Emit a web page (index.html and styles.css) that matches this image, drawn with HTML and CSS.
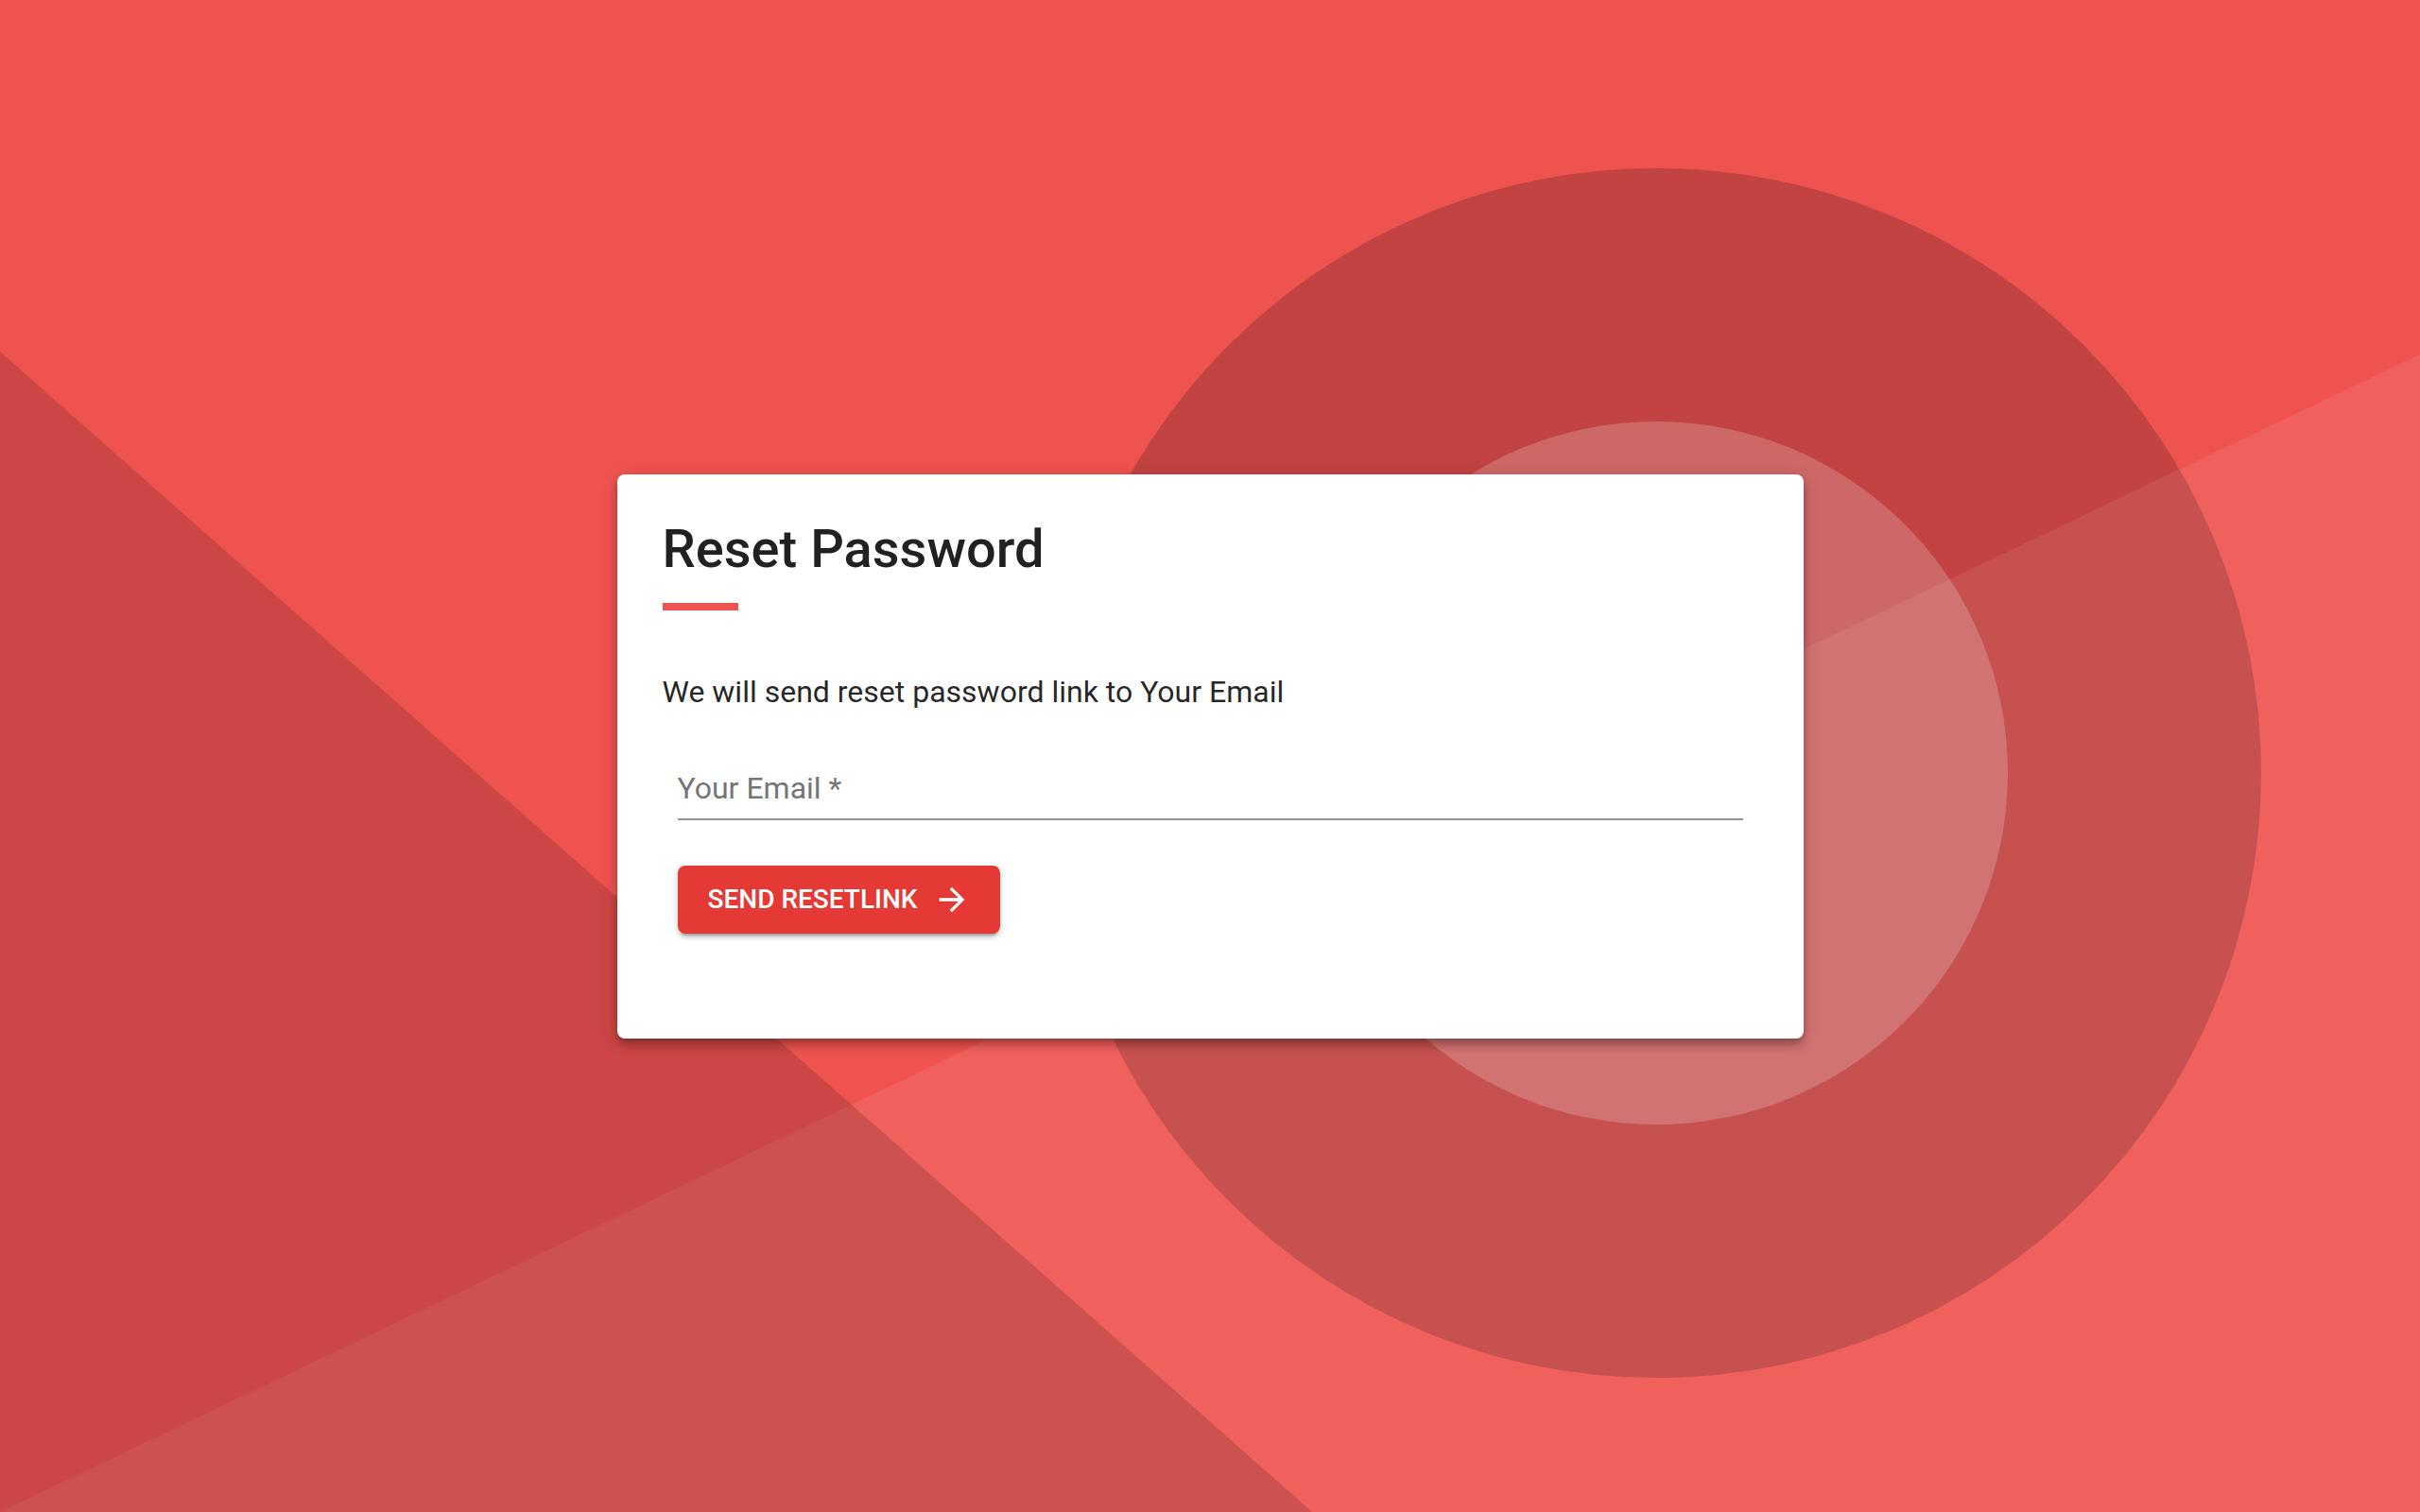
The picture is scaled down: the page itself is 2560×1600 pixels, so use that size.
FILE: index.html
```html
<!DOCTYPE html>
<html lang="en">
<head>
<meta charset="utf-8">
<title>Reset Password</title>
<link rel="stylesheet" href="styles.css">
</head>
<body>
<svg class="backdrop" viewBox="0 0 2560 1600" preserveAspectRatio="none" aria-hidden="true">
  <rect x="0" y="0" width="2560" height="1600" fill="#ef5350"/>
  <circle cx="1752" cy="818" r="640" fill="#000" fill-opacity="0.19"/>
  <circle cx="1752" cy="818" r="372" fill="#fff" fill-opacity="0.2"/>
  <polygon points="2560,375 2560,1600 0,1600" fill="#fff" fill-opacity="0.08"/>
  <polygon points="0,372 1388,1600 0,1600" fill="#000" fill-opacity="0.15"/>
</svg>
<main class="page">
  <section class="card">
    <h1 class="card-title">Reset Password</h1>
    <div class="title-rule"></div>
    <p class="card-text">We will send reset password link to Your Email</p>
    <form class="reset-form" onsubmit="return false">
      <input class="field-input" type="email" placeholder="Your Email *" aria-label="Your Email">
      <button class="send-btn" type="submit">
        <span class="send-label">SEND RESETLINK</span>
        <svg class="send-icon" viewBox="0 0 24 24" aria-hidden="true"><path d="M12 4l-1.41 1.41L16.17 11H4v2h12.17l-5.58 5.59L12 20l8-8z"/></svg>
      </button>
    </form>
  </section>
</main>
</body>
</html>
```

FILE: styles.css
```css
html, body {
  margin: 0;
  padding: 0;
  width: 100%;
  height: 100%;
  overflow: hidden;
}

body {
  position: relative;
  font-family: Roboto, "Liberation Sans", Arial, sans-serif;
  background: #ef5350;
}

.backdrop {
  position: absolute;
  inset: 0;
  width: 100%;
  height: 100%;
  display: block;
}

.page {
  position: relative;
  z-index: 1;
  height: 100%;
  display: flex;
  align-items: center;
  justify-content: center;
}

.card {
  width: 1255px;
  box-sizing: border-box;
  padding: 47px 48px 111px 48px;
  background: #ffffff;
  border-radius: 8px;
  box-shadow: 0 4px 8px -2px rgba(0,0,0,0.22), 0 8px 10px 0 rgba(0,0,0,0.16), 0 2px 20px 0 rgba(0,0,0,0.12);
}

.card-title {
  margin: 0;
  font-size: 56px;
  line-height: 64px;
  font-weight: 500;
  color: rgba(0,0,0,0.87);
}

.title-rule {
  width: 80px;
  height: 8px;
  margin-top: 25px;
  background: #ef5350;
}

.card-text {
  margin: 62px 0 0 0;
  font-size: 32px;
  line-height: 48px;
  font-weight: 400;
  color: rgba(0,0,0,0.87);
}

.reset-form {
  margin: 54px 16px 0 16px;
  display: flex;
  flex-direction: column;
  align-items: flex-start;
}

.field-input {
  width: 100%;
  box-sizing: border-box;
  height: 58px;
  padding: 0 0 8px 0;
  margin: 0;
  border: none;
  border-bottom: 2px solid #949494;
  outline: none;
  background: transparent;
  font-family: Roboto, "Liberation Sans", Arial, sans-serif;
  font-size: 32px;
  line-height: 48px;
  color: rgba(0,0,0,0.87);
}

.field-input::placeholder {
  color: #757575;
  opacity: 1;
}

.send-btn {
  margin-top: 48px;
  height: 72px;
  display: flex;
  align-items: center;
  gap: 16px;
  padding: 0 31px 0 32px;
  border: none;
  border-radius: 8px;
  background: #e53935;
  color: #ffffff;
  font-family: Roboto, "Liberation Sans", Arial, sans-serif;
  font-size: 28px;
  font-weight: 500;
  letter-spacing: 0;
  cursor: pointer;
  box-shadow: 0 6px 2px -4px rgba(0,0,0,0.2), 0 4px 4px 0 rgba(0,0,0,0.14), 0 2px 10px 0 rgba(0,0,0,0.12);
}

.send-label {
  line-height: 40px;
}

.send-icon {
  width: 40px;
  height: 40px;
  fill: #ffffff;
  display: block;
}
```
